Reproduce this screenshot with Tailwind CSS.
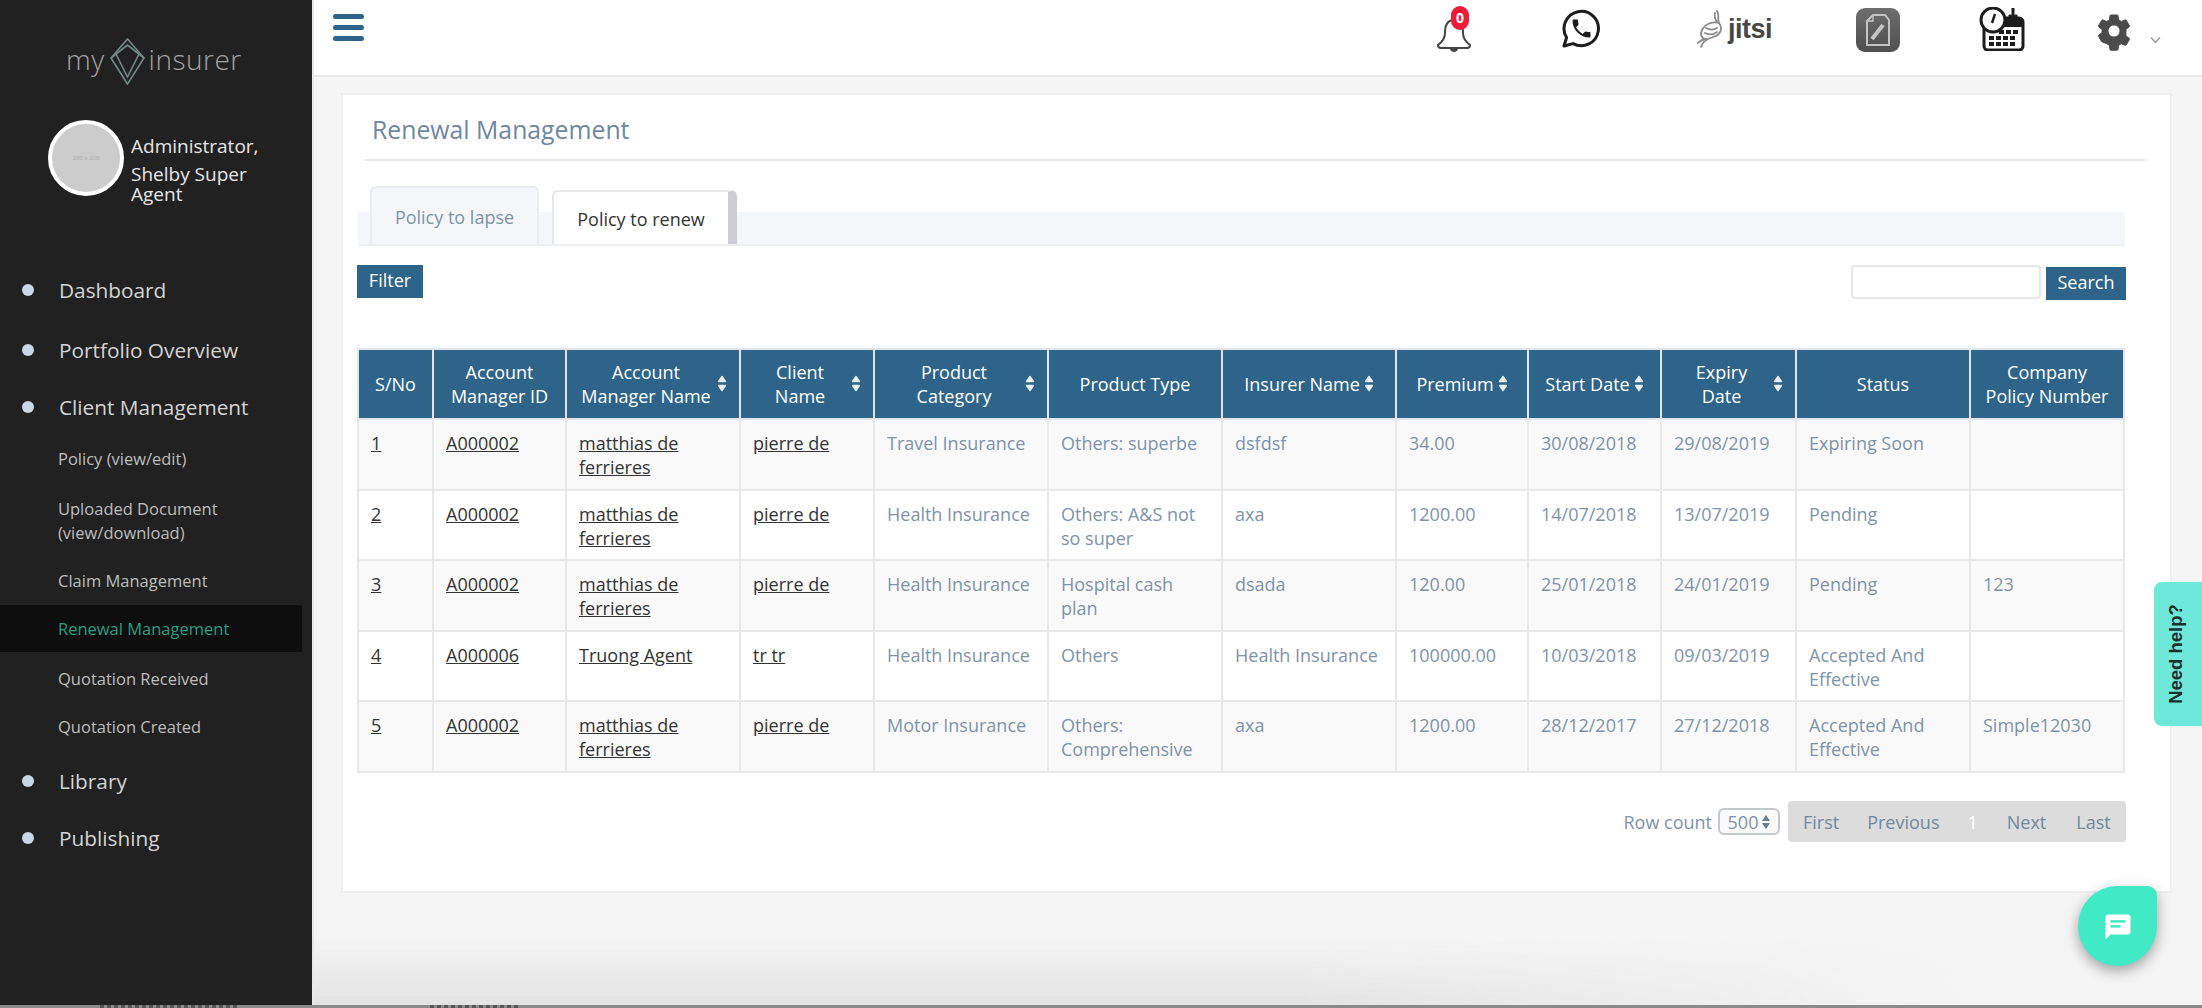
<!DOCTYPE html>
<html>
<head>
  <meta charset="UTF-8">
  <title>Renewal Management</title>
  <script src="https://cdn.jsdelivr.net/npm/@tailwindcss/browser@4"></script>
</head>
<body class="h-[1008px] w-[2202px] overflow-hidden bg-[#f5f5f5] font-['Open_Sans',sans-serif] text-[18px] leading-6 text-[#7e93a8]">
  <div class="relative flex h-[1005px]">

    <!-- sidebar -->
    <aside class="h-full w-[312px] shrink-0 bg-[#212121]">
      <div class="flex h-[118px] items-start pl-[66px] pt-[38px]">
        <span class="mt-[3px] text-[28px] leading-9 font-light tracking-[0.5px] text-[#a3a3a3]">my</span>
        <svg class="ml-[5px] h-[47px] w-[35px]" viewBox="0 0 35 47" fill="none" stroke="#6f8c87" stroke-width="1.6"><path d="M17.5 1 L34 20 L17.5 46 L1 20 Z"/><path d="M1 20 L17.5 7 L34 20"/><path d="M6 16 L17.5 39 L29 16"/></svg>
        <span class="ml-[4px] mt-[3px] text-[28px] leading-9 font-light tracking-[0.5px] text-[#a3a3a3]">insurer</span>
      </div>
      <div class="flex h-[112px] items-start pl-[48px] pt-[2px]">
        <div class="flex h-[76px] w-[76px] shrink-0 items-center justify-center rounded-full border-[4px] border-white bg-[#cccccc] text-[6px] text-[#a8a8a8]">200 x 200</div>
        <div class="ml-[7px] pt-[16px] text-[19px] leading-5 text-[#e6e6e6]">
          <div class="mb-2">Administrator,</div>
          <div>Shelby Super<br>Agent</div>
        </div>
      </div>
      <nav id="menu" class="pt-[31px]"></nav>
    </aside>

    <!-- main -->
    <main class="flex-1 border-l-2 border-[#e8e8e8]">
      <header class="flex h-[77px] items-start justify-between border-b-2 border-[#e6e8ea] bg-white pl-[19px]">
        <div class="mt-[14px] flex w-[31px] flex-col gap-[6px]">
          <div class="h-[5px] rounded-sm bg-[#2e6489]"></div>
          <div class="h-[5px] rounded-sm bg-[#2e6489]"></div>
          <div class="h-[5px] rounded-sm bg-[#2e6489]"></div>
        </div>
        <div class="flex items-start">
          <!-- bell -->
          <div class="relative mt-[17px] h-[36px] w-[36px]">
            <svg class="h-[36px] w-[36px]" viewBox="0 0 36 36" fill="none" stroke="#444" stroke-width="2"><path d="M18 3 C10 3 9 10 9 16 C9 22 6 25 2 28 C2 30 3 31 5 31 L31 31 C33 31 34 30 34 28 C30 25 27 22 27 16 C27 10 26 3 18 3 Z"/><path d="M14 32 C15 36 21 36 22 32 Z" fill="#444" stroke="none"/></svg>
            <span class="absolute left-[15px] top-[-11px] flex h-[24px] w-[18px] items-center justify-center rounded-full bg-[#ee1c36] text-[14px] leading-none font-bold text-white">0</span>
          </div>
          <!-- whatsapp -->
          <svg class="ml-[90px] mt-[9px] h-[39px] w-[39px]" viewBox="0 0 39 39" fill="none"><path d="M2 37 L4.6 28.5 A17.2 17.2 0 1 1 11 34.6 Z" stroke="#1d1d1d" stroke-width="3" stroke-linejoin="round"/><path transform="translate(7.5 7.5) scale(1)" fill="#1d1d1d" d="M6.62 10.79c1.44 2.83 3.76 5.14 6.59 6.59l2.2-2.2c.27-.27.67-.36 1.02-.24 1.12.37 2.33.57 3.57.57.55 0 1 .45 1 1V20c0 .55-.45 1-1 1-9.39 0-17-7.61-17-17 0-.55.45-1 1-1h3.5c.55 0 1 .45 1 1 0 1.25.2 2.45.57 3.57.11.35.03.74-.25 1.02l-2.2 2.2z"/></svg>
          <!-- jitsi -->
          <div class="ml-[96px] mt-[10px] flex items-center">
            <svg class="h-[38px] w-[30px]" viewBox="0 0 30 38" fill="none" stroke="#8a8a8a" stroke-width="1.8" stroke-linecap="round"><path d="M20 1 C23 6 20 9 22 13 C26 18 24 25 16 27 C10 29 5 33 4 37"/><path d="M22 13 C16 11 8 14 5 20 C3 24 4 28 8 29"/><path d="M18 3 C17 6 18 9 20 12"/><path d="M9 18 C13 20 17 20 20 18"/><path d="M8 23 C12 25 16 25 20 22"/><path d="M1 33 C4 30 7 29 10 29"/></svg>
            <span class="ml-[1px] font-['Liberation_Sans',sans-serif] text-[27px] leading-none font-bold tracking-[-0.5px] text-[#474747]">jitsi</span>
          </div>
          <!-- doc -->
          <div class="ml-[84px] mt-[8px] flex h-[44px] w-[44px] items-center justify-center rounded-[9px] bg-linear-to-b from-[#6e6e6e] to-[#4f4f4f]">
            <svg class="h-[32px] w-[24px]" viewBox="0 0 24 32" fill="none" stroke="#c4c4c4" stroke-width="2"><path d="M7 1 L19 1 L23 6 L23 31 L1 31 L1 7 Z"/><path d="M7 1 L7 7 L1 7" stroke-width="1.4"/><path d="M6 25 L17 11" stroke-width="4"/></svg>
          </div>
          <!-- calendar -->
          <svg class="ml-[79px] mt-[7px] h-[44px] w-[46px]" viewBox="0 0 46 44" fill="none"><rect x="5" y="11" width="39" height="32" rx="4" stroke="#1c1c1c" stroke-width="3"/><rect x="5" y="11" width="39" height="9" fill="#1c1c1c"/><path d="M34 1 L34 12 M30 8 L34 12 L38 8" stroke="#1c1c1c" stroke-width="3"/><circle cx="14" cy="13" r="12" fill="#fff" stroke="#1c1c1c" stroke-width="3"/><path d="M16 7 L13 16" stroke="#1c1c1c" stroke-width="2.4"/><g fill="#1c1c1c"><rect x="20" y="23" width="5" height="4"/><rect x="27" y="23" width="5" height="4"/><rect x="34" y="23" width="5" height="4"/><rect x="10" y="29" width="5" height="4"/><rect x="17" y="29" width="5" height="4"/><rect x="24" y="29" width="5" height="4"/><rect x="31" y="29" width="5" height="4"/><rect x="10" y="35" width="5" height="4"/><rect x="17" y="35" width="5" height="4"/><rect x="24" y="35" width="5" height="4"/><rect x="31" y="35" width="5" height="4"/></g></svg>
          <!-- gear -->
          <svg class="ml-[69px] mt-[11px] h-[40px] w-[40px]" viewBox="0 0 24 24" fill="#4b4b4b" stroke="#4b4b4b" stroke-width="0.6"><path d="M19.14 12.94c.04-.3.06-.61.06-.94 0-.32-.02-.64-.07-.94l2.03-1.58c.18-.14.23-.41.12-.61l-1.92-3.32c-.12-.22-.37-.29-.59-.22l-2.39.96c-.5-.38-1.03-.7-1.62-.94l-.36-2.54c-.04-.24-.24-.41-.48-.41h-3.84c-.24 0-.43.17-.47.41l-.36 2.54c-.59.24-1.13.57-1.62.94l-2.39-.96c-.22-.08-.47 0-.59.22L2.74 8.87c-.12.21-.08.47.12.61l2.03 1.58c-.05.3-.09.63-.09.94s.02.64.07.94l-2.03 1.58c-.18.14-.23.41-.12.61l1.92 3.32c.12.22.37.29.59.22l2.39.96c.5.38 1.03.7 1.62.94l.36 2.54c.05.24.24.41.48.41h3.84c.24 0 .44-.17.47-.41l.36-2.54c.59-.24 1.13-.56 1.62-.94l2.39.96c.22.08.47 0 .59-.22l1.92-3.32c.12-.22.07-.47-.12-.61l-2.01-1.58zM12 15.6c-1.98 0-3.6-1.62-3.6-3.6s1.62-3.6 3.6-3.6 3.6 1.62 3.6 3.6-1.62 3.6-3.6 3.6z"/></svg>
          <svg class="ml-[16px] mr-[41px] mt-[36px] h-[8px] w-[11px]" viewBox="0 0 11 8" fill="none" stroke="#999" stroke-width="1.5"><path d="M1 1.5 L5.5 6.5 L10 1.5"/></svg>
        </div>
      </header>

      <section class="ml-[27px] mt-[16px] h-[800px] w-[1831px] border-2 border-[#efefef] bg-white">
        <div class="ml-[22px] mr-[24px] border-b-2 border-[#e8ebef] pb-[14px] pl-[7px] pt-[18px]">
          <h1 class="text-[24.8px] leading-8 text-[#6f87a0]">Renewal Management</h1>
        </div>

        <div class="ml-[15px] mr-[45px] mt-[27px] flex h-[58px] items-end border-b-2 border-[#eef0f3] bg-[linear-gradient(to_bottom,transparent_24px,#f4f6f9_24px)] pl-[12px]">
          <div class="flex h-[58px] w-[169px] items-center justify-center rounded-t-md border-2 border-b-0 border-[#e9edf2] bg-[#f4f6fa] pt-0.5 text-[#7e93a8]">Policy to lapse</div>
          <div class="ml-[13px] flex h-[54px] w-[185px] items-center justify-center rounded-t-md border-2 border-b-0 border-r-[9px] border-[#e6e8ea] border-r-[#cbcfd3] bg-white pt-0.5 text-[#333]">Policy to renew</div>
        </div>

        <div class="ml-[14px] mr-[44px] mt-[19px] flex h-[35px] items-start justify-between">
          <button class="h-[33px] w-[66px] bg-[#2e6489] pb-[3px] text-white">Filter</button>
          <div class="flex items-start gap-[5px]">
            <input class="h-[34px] w-[190px] rounded-sm border-2 border-[#e8e8e8] bg-white">
            <button class="mt-[2px] h-[33px] w-[80px] bg-[#2e6489] pb-[3px] text-white">Search</button>
          </div>
        </div>

        <table class="ml-[14px] mt-[48px] w-[1766px] table-fixed border-collapse">
          <colgroup>
            <col class="w-[75px]"><col class="w-[133px]"><col class="w-[174px]"><col class="w-[134px]"><col class="w-[174px]"><col class="w-[174px]"><col class="w-[174px]"><col class="w-[132px]"><col class="w-[133px]"><col class="w-[135px]"><col class="w-[174px]"><col class="w-[154px]">
          </colgroup>
          <thead id="head"></thead>
          <tbody id="rows"></tbody>
        </table>

        <div class="mr-[44px] mt-[28px] flex items-center justify-end">
          <span>Row count</span>
          <div class="ml-[6px] flex h-[27px] w-[62px] items-center justify-center gap-1 rounded-md border-2 border-[#c4c8cc] bg-[#fafafa]">500
            <svg class="h-[14px] w-[8px]" viewBox="0 0 8 14" fill="#6b7f93"><path d="M4 0 L8 6 L0 6 Z M0 8 L8 8 L4 14 Z"/></svg>
          </div>
          <div class="ml-[8px] flex h-[41px] w-[338px] items-center rounded-sm bg-[#dcdcdc] pl-[15px] text-[#7088a0]">
            <span>First</span><span class="ml-[28px]">Previous</span><span class="ml-[28px] text-white">1</span><span class="ml-[29px]">Next</span><span class="ml-[30px]">Last</span>
          </div>
        </div>
      </section>
    </main>

    <!-- overlays -->
    <div class="absolute bottom-0 left-[314px] h-[65px] w-[1650px] bg-linear-to-b from-transparent to-[#e2e2e2] [mask-image:linear-gradient(to_right,black_60%,transparent)]"></div>
    <div class="absolute left-[2154px] top-[582px] flex h-[144px] w-[48px] items-center justify-center rounded-l-lg bg-[#6ee8d8] pr-1">
      <span class="-rotate-90 whitespace-nowrap font-['Liberation_Sans',sans-serif] text-[18.5px] font-bold text-[#1f2f2c]">Need help?</span>
    </div>
    <div class="absolute left-[2078px] top-[886px] flex h-[80px] w-[79px] items-center justify-center rounded-[50%_12%_50%_50%] bg-[#40eac5] pt-[2px] shadow-[0_5px_14px_rgba(0,0,0,0.35)]">
      <svg class="h-[30px] w-[30px]" viewBox="0 0 24 24" fill="#fff"><path d="M20 2H4c-1.1 0-1.99.9-1.99 2L2 22l4-4h14c1.1 0 2-.9 2-2V4c0-1.1-.9-2-2-2z"/><rect x="6" y="6.5" width="12" height="2" fill="#40eac5"/><rect x="6" y="10.5" width="8" height="2" fill="#40eac5"/></svg>
    </div>
  </div>
  <div class="flex h-[3px] bg-[#8a8a8a]">
    <div class="ml-[100px] w-[140px] bg-[repeating-linear-gradient(to_right,#555_0,#555_4px,transparent_4px,transparent_7px)]"></div>
    <div class="ml-[190px] w-[90px] bg-[repeating-linear-gradient(to_right,#555_0,#555_4px,transparent_4px,transparent_7px)]"></div>
  </div>

  <script type="module">
    // bullet menu, sub items are smaller and have no bullet
    const menu = [
      { t: "Dashboard", h: 57 }, { t: "Portfolio Overview", h: 63 }, { t: "Client Management", h: 51 },
      { t: "Policy (view/edit)", sub: 1, h: 53 },
      { t: "Uploaded Document<br>(view/download)", sub: 1, h: 71 },
      { t: "Claim Management", sub: 1, h: 49 },
      { t: "Renewal Management", sub: 1, h: 47, active: 1 },
      { t: "Quotation Received", sub: 1, h: 53 },
      { t: "Quotation Created", sub: 1, h: 43 },
      { t: "Library", h: 65 }, { t: "Publishing", h: 49 }
    ]
    document.getElementById("menu").innerHTML = menu.map(({ t, sub, h, active }) => {
      if (active) return `<div class="flex w-[302px] items-center bg-[#0e0e0e] pl-[58px] text-[16.5px] text-[#2a9d82]" style="height:${h}px">${t}</div>`
      if (sub) return `<div class="flex items-center pl-[58px] text-[16.5px] leading-6 text-[#bdbdbd]" style="height:${h}px"><div>${t}</div></div>`
      return `<div class="flex items-center pl-[22px] text-[20.8px] text-[#d4d4d4]" style="height:${h}px"><span class="mr-[25px] h-[12px] w-[12px] rounded-full bg-[#c9d8e6]"></span>${t}</div>`
    }).join("\n")

    const sort = `<svg class="h-[18px] w-[10px] shrink-0" viewBox="0 0 10 18" fill="#e8eef3" stroke="#e8eef3" stroke-width="1.4" stroke-linejoin="round"><path d="M5 1.5 L8.5 6.5 L1.5 6.5 Z M1.5 10.5 L8.5 10.5 L5 15.5 Z"/></svg>`
    const cols = [
      ["S/No"], ["Account<br>Manager ID"], ["Account<br>Manager Name", 2], ["Client<br>Name", 2], ["Product<br>Category", 2],
      ["Product Type"], ["Insurer Name", 1], ["Premium", 1], ["Start Date", 1], ["Expiry<br>Date", 2], ["Status"], ["Company<br>Policy Number"]
    ]
    document.getElementById("head").innerHTML = `<tr class="h-[70px]">` + cols.map(([t, s]) => {
      if (s == 2) return `<th class="border-2 border-[#dfe6ec] bg-[#2e6489] pl-2 pr-3 font-normal text-white"><div class="flex items-center"><div class="flex-1 text-center">${t}</div>${sort}</div></th>`
      if (s == 1) return `<th class="border-2 border-[#dfe6ec] bg-[#2e6489] font-normal text-white"><div class="flex items-center justify-center gap-1">${t}${sort}</div></th>`
      return `<th class="border-2 border-[#dfe6ec] bg-[#2e6489] px-1 font-normal text-white">${t}</th>`
    }).join("") + `</tr>`

    const dados = [
      ["1", "A000002", "matthias de ferrieres", "pierre de", "Travel Insurance", "Others: superbe", "dsfdsf", "34.00", "30/08/2018", "29/08/2019", "Expiring Soon", ""],
      ["2", "A000002", "matthias de ferrieres", "pierre de", "Health Insurance", "Others: A&amp;S not so super", "axa", "1200.00", "14/07/2018", "13/07/2019", "Pending", ""],
      ["3", "A000002", "matthias de ferrieres", "pierre de", "Health Insurance", "Hospital cash plan", "dsada", "120.00", "25/01/2018", "24/01/2019", "Pending", "123"],
      ["4", "A000006", "Truong Agent", "tr tr", "Health Insurance", "Others", "Health Insurance", "100000.00", "10/03/2018", "09/03/2019", "Accepted And Effective", ""],
      ["5", "A000002", "matthias de ferrieres", "pierre de", "Motor Insurance", "Others: Comprehensive", "axa", "1200.00", "28/12/2017", "27/12/2018", "Accepted And Effective", "Simple12030"]
    ]
    document.getElementById("rows").innerHTML = dados.map((linha, i) =>
      `<tr class="${i % 2 == 0 ? "h-[71px] bg-[#f9f9f9]" : "h-[70px] bg-white"}">` + linha.map((v, c) =>
        `<td class="border-2 border-[#e8e8e8] px-[12px] pt-[11px] align-top ${c < 4 ? "text-[#333] underline" : ""}">${v}</td>`
      ).join("") + `</tr>`
    ).join("\n")
  </script>
</body>
</html>
